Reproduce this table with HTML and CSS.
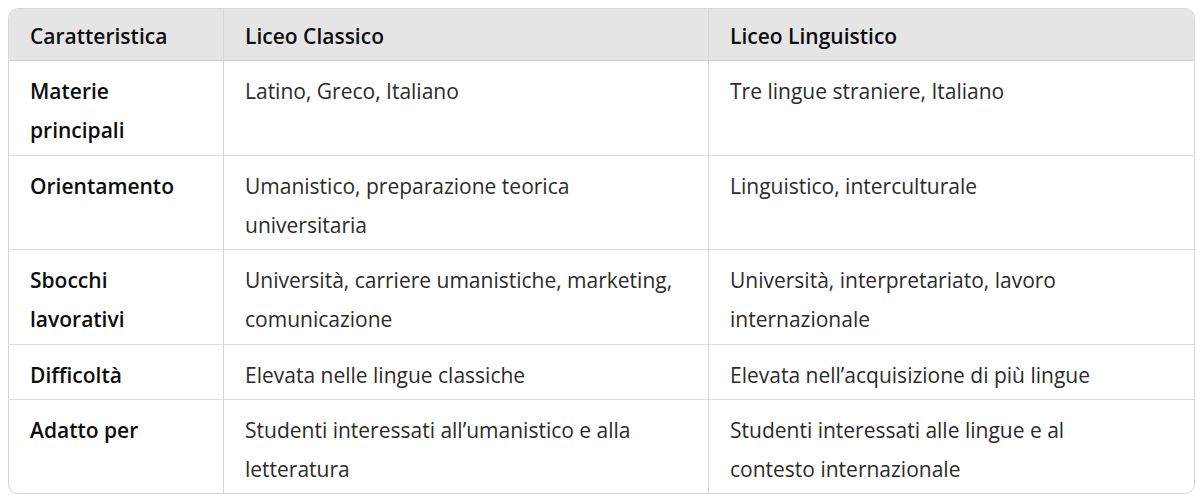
FILE: index.html
```html
<!DOCTYPE html>
<html lang="it">
<head>
<meta charset="utf-8">
<link rel="stylesheet" href="styles.css">
</head>
<body>
<div class="wrap">
<table class="cmp">
  <colgroup>
    <col class="c1"><col class="c2"><col class="c3">
  </colgroup>
  <thead>
    <tr><th>Caratteristica</th><th>Liceo Classico</th><th>Liceo Linguistico</th></tr>
  </thead>
  <tbody>
    <tr><td class="k">Materie<br>principali</td><td>Latino, Greco, Italiano</td><td>Tre lingue straniere, Italiano</td></tr>
    <tr><td class="k">Orientamento</td><td>Umanistico, preparazione teorica<br>universitaria</td><td>Linguistico, interculturale</td></tr>
    <tr><td class="k">Sbocchi<br>lavorativi</td><td>Università, carriere umanistiche, marketing,<br>comunicazione</td><td>Università, interpretariato, lavoro<br>internazionale</td></tr>
    <tr><td class="k">Difficoltà</td><td>Elevata nelle lingue classiche</td><td>Elevata nell’acquisizione di più lingue</td></tr>
    <tr><td class="k">Adatto per</td><td>Studenti interessati all’umanistico e alla<br>letteratura</td><td>Studenti interessati alle lingue e al<br>contesto internazionale</td></tr>
  </tbody>
</table>
</div>
</body>
</html>
```

FILE: styles.css
```css
html, body {
  margin: 0;
  padding: 0;
  background: #ffffff;
}
.wrap {
  padding: 8px 6px 0 8px;
}
.cmp {
  width: 1187px;
  border-collapse: separate;
  border-spacing: 0;
  border: 1px solid #d6d6d6;
  border-radius: 10px;
  overflow: hidden;
  table-layout: fixed;
  font-family: "Open Sans", "Noto Sans", sans-serif;
  font-size: 21px;
  color: #2b2b2b;
}
.c1 { width: 214px; }
.c2 { width: 485px; }
.c3 { width: auto; }
.cmp th {
  background: #e5e5e5;
  text-align: left;
  font-weight: 600;
  color: #0d0d0d;
  height: 52px;
  padding: 3px 21px 0 21px;
  line-height: 30px;
  border-bottom: 1px solid #d0d0d0;
  box-sizing: border-box;
  white-space: nowrap;
}
.cmp td {
  vertical-align: top;
  padding: 11px 20px 3.7px 21px;
  line-height: 39.4px;
  border-bottom: 1px solid #dcdcdc;
  white-space: nowrap;
}
.cmp th + th, .cmp td + td {
  border-left: 1px solid #d6d6d6;
}
.cmp tbody tr:last-child td {
  border-bottom: none;
}
.cmp td.k {
  font-weight: 600;
  color: #0d0d0d;
}
```
